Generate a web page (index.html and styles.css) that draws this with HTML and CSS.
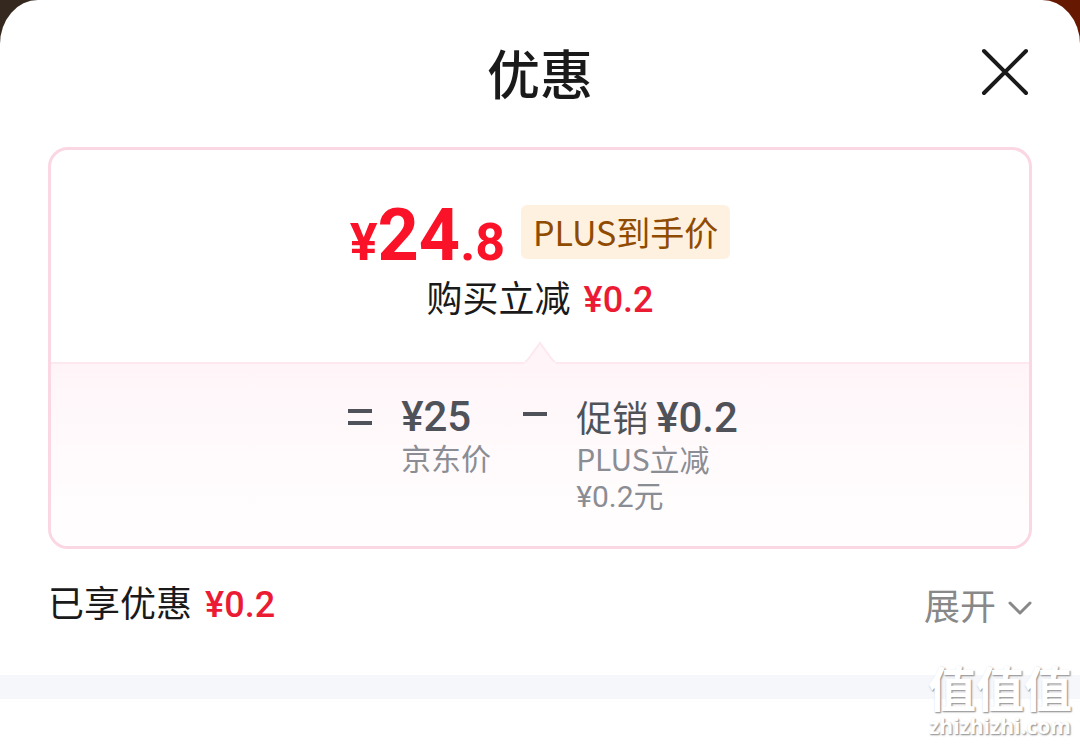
FILE: index.html
```html
<!DOCTYPE html>
<html lang="zh-CN">
<head>
<meta charset="utf-8">
<meta name="viewport" content="width=device-width, initial-scale=1">
<title>优惠</title>
<link rel="stylesheet" href="styles.css">
</head>
<body>
<main class="sheet">
  <header class="header">
    <h1 class="title">优惠</h1>
    <button class="close" type="button" aria-label="关闭">
      <svg width="48" height="48" viewBox="0 0 48 48" fill="none" stroke="#1a1a1a" stroke-width="4" stroke-linecap="round"><path d="M3 3 L45 45 M45 3 L3 45"/></svg>
    </button>
  </header>

  <section class="card">
    <div class="summary">
      <div class="price-row">
        <strong class="price"><span class="price-sign">¥</span><span class="price-main">24</span><span class="price-cents">.8</span></strong>
        <span class="tag">PLUS到手价</span>
      </div>
      <p class="saving">购买立减 <span class="amount">¥0.2</span></p>
    </div>
    <div class="formula">
      <svg class="pointer" width="32" height="23" viewBox="0 0 32 23"><path d="M0 23 L1 21 Q3 20 5 17 L16 2 L27 17 Q29 20 31 21 L32 23Z" fill="#fff5f8"/><path d="M1 21 Q3 20 5 17 L16 2 L27 17 Q29 20 31 21" fill="none" stroke="#fde8ee" stroke-width="2"/></svg>
      <svg class="operator" width="26" height="42" viewBox="0 0 26 42" role="img" aria-label="等于"><path d="M1 17H25M1 29H25" stroke="#505259" stroke-width="4"/></svg>
      <div class="term">
        <p class="term-value">¥25</p>
        <p class="term-note">京东价</p>
      </div>
      <svg class="operator minus" width="26" height="42" viewBox="0 0 26 42" role="img" aria-label="减"><path d="M1 20H25" stroke="#505259" stroke-width="4"/></svg>
      <div class="term">
        <p class="term-value"><span class="term-label">促销</span>¥0.2</p>
        <p class="term-note">PLUS立减<br><span class="note-amount">¥0.2</span>元</p>
      </div>
    </div>
  </section>

  <div class="enjoyed">
    <p class="enjoyed-text">已享优惠 <span class="amount">¥0.2</span></p>
    <button class="expand" type="button">展开
      <svg class="chevron" width="24" height="16" viewBox="0 0 24 16" fill="none" stroke="#888" stroke-width="3" stroke-linecap="round" stroke-linejoin="round"><path d="M2 3 L12 13 L22 3"/></svg>
    </button>
  </div>
  <hr class="band">
</main>
<div class="watermark">
  <span class="mark-name">值值值</span>
  <span class="mark-site">zhizhizhi.com</span>
</div>
</body>
</html>
```

FILE: styles.css
```css
* { box-sizing: border-box; }

body {
  position: relative;
  min-height: 100vh;
  margin: 0;
  background: linear-gradient(90deg, #35291f 50%, #661900 50%);
  font-family: "Noto Sans CJK SC", sans-serif;
  color: #1a1a1a;
}

h1, p { margin: 0; font-weight: 400; }

button {
  padding: 0;
  border: 0;
  background: none;
  font-family: inherit;
}

svg { display: block; }

.sheet {
  min-height: 100vh;
  padding-top: 36px;
  border-radius: 38px 38px 0 0 / 44px 44px 0 0;
  background: #fff;
}

.header {
  display: grid;
  grid-template-columns: 1fr auto 1fr;
  align-items: center;
  height: 72px;
  margin: 0 51px 39px;
}

.title {
  grid-column: 2;
  font-size: 53px;
  font-weight: 500;
  line-height: 70px;
}

.close { justify-self: end; }

.card {
  margin: 0 48px;
  border: 3px solid #fad7e2;
  border-radius: 20px;
  overflow: hidden;
}

.summary {
  display: flex;
  flex-direction: column;
  align-items: center;
  height: 212px;
  padding-top: 55px;
}

.price-row {
  display: flex;
  align-items: flex-start;
  gap: 16px;
  height: 66px;
}

.price {
  padding-top: 4px;
  font-family: Roboto, sans-serif;
  font-weight: 700;
  line-height: 54px;
  color: #fa1228;
}

.price-sign, .price-cents { font-size: 52px; }
.price-main { font-size: 72px; }

.tag {
  padding: 0 12px;
  border-radius: 6px;
  background: #fff1e0;
  font-size: 34px;
  line-height: 54px;
  color: #8f4b00;
}

.saving { font-size: 36px; line-height: 50px; }

.amount {
  margin-left: 5px;
  font-family: Roboto, sans-serif;
  font-weight: 500;
  color: #ec1b34;
}

.formula {
  position: relative;
  display: flex;
  justify-content: center;
  min-height: 184px;
  padding: 30px 0 0 5px;
  border-top: 2px solid #fde8ee;
  background: linear-gradient(#fff5f8, #fffdfd 80%);
  color: #505259;
}

.pointer {
  position: absolute;
  bottom: 100%;
  left: 50%;
  transform: translateX(-50%);
}

.operator { margin-right: 28px; }
.minus { margin-left: 31px; }

.term-value {
  font-family: Roboto, sans-serif;
  font-size: 42px;
  font-weight: 500;
  line-height: 45px;
}

.term-label {
  margin-right: 8px;
  font-family: "Noto Sans CJK SC", sans-serif;
  font-size: 36px;
  font-weight: 400;
}

.term-note {
  font-size: 30px;
  line-height: 36px;
  color: #8b8d94;
}

.note-amount { font-family: Roboto, sans-serif; }

.enjoyed {
  display: flex;
  align-items: center;
  justify-content: space-between;
  height: 126px;
  padding: 0 48px 16px;
}

.enjoyed-text {
  padding-bottom: 6px;
  font-size: 36px;
}

.expand {
  display: flex;
  align-items: center;
  gap: 12px;
  font-size: 36px;
  color: #888;
}

.chevron { margin-top: 8px; }

.band {
  height: 24px;
  margin: 0;
  border: 0;
  background: #f6f7fb;
}

.watermark {
  position: absolute;
  right: 8px;
  bottom: 6px;
  display: flex;
  flex-direction: column;
  align-items: center;
  color: #fff;
  text-shadow: 1px 1px 2px #999, 1px 1px 1px #bbb;
}

.mark-name {
  font-size: 48px;
  font-weight: 700;
  line-height: 56px;
}

.mark-site {
  font-family: "Open Sans", sans-serif;
  font-size: 21px;
  font-weight: 700;
  line-height: 24px;
}
```
